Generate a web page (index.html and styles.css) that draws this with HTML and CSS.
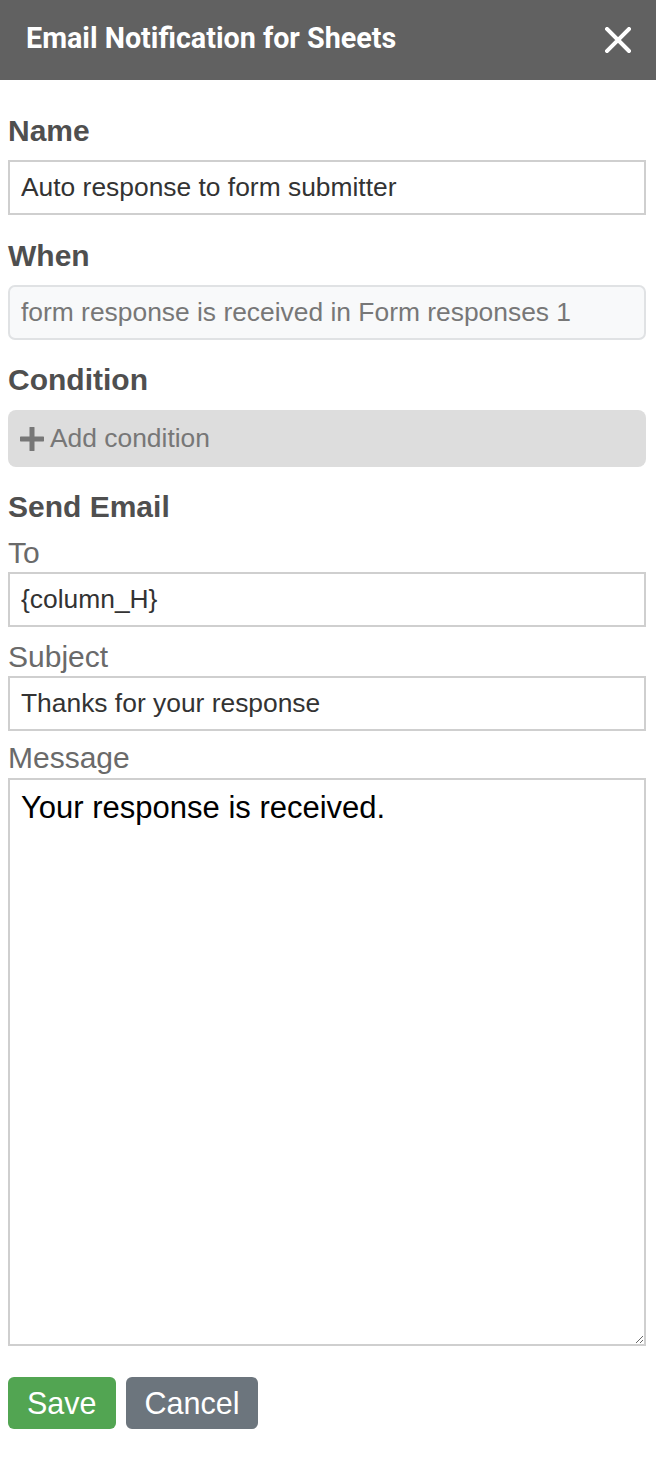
FILE: index.html
```html
<!DOCTYPE html>
<html>
<head>
<meta charset="utf-8">
<link rel="stylesheet" href="styles.css">
</head>
<body>
<header class="topbar">
  <h1 class="title">Email Notification for Sheets</h1>
  <button class="close" aria-label="Close">
    <svg width="26" height="26" viewBox="0 0 26 26"><path d="M2 2 L24 24 M24 2 L2 24" stroke="#fff" stroke-width="4" stroke-linecap="square"/></svg>
  </button>
</header>
<form class="form">
  <div class="group">
    <label class="heading">Name</label>
    <input class="field" type="text" value="Auto response to form submitter">
  </div>
  <div class="group">
    <label class="heading">When</label>
    <div class="field readonly">form response is received in Form responses 1</div>
  </div>
  <div class="group">
    <label class="heading">Condition</label>
    <div class="add-cond">
      <svg class="plus" width="24" height="24" viewBox="0 0 24 24"><path d="M12 1 V23 M1 12 H23" stroke="#777" stroke-width="5" stroke-linecap="round"/></svg>
      <span>Add condition</span>
    </div>
  </div>
  <div class="group send">
    <label class="heading">Send Email</label>
    <label class="sub">To</label>
    <input class="field" type="text" value="{column_H}">
    <label class="sub">Subject</label>
    <input class="field subject" type="text" value="Thanks for your response">
    <label class="sub msg-label">Message</label>
    <textarea class="message">Your response is received.</textarea>
  </div>
  <div class="actions">
    <button type="button" class="btn save">Save</button>
    <button type="button" class="btn cancel">Cancel</button>
  </div>
</form>
</body>
</html>
```
FILE: styles.css
```css
* { box-sizing: border-box; }
html, body { margin: 0; padding: 0; background: #fff; }
body { font-family: "Liberation Sans", Arial, sans-serif; width: 656px; }

.topbar {
  height: 80px;
  background: #616161;
  display: flex;
  align-items: center;
  justify-content: space-between;
  padding: 0 25px 0 26px;
}
.title {
  margin: 0;
  font-family: Roboto, "Liberation Sans", sans-serif;
  font-weight: 700;
  font-size: 28.7px;
  color: #fff;
  line-height: 1;
  margin-top: -4px;
}
.close {
  border: 0;
  background: none;
  padding: 0;
  width: 26px;
  height: 26px;
  display: block;
}
.close svg { display: block; }

.form { padding: 33px 10px 0 8px; }
.group { display: flex; flex-direction: column; }

.heading {
  font-weight: 700;
  font-size: 30px;
  line-height: 36px;
  color: #4f4f4f;
  margin: 0 0 11px;
}
.field {
  height: 55px;
  border: 2px solid #cfcfcf;
  border-radius: 0;
  padding: 0 11px;
  font-family: "Liberation Sans", Arial, sans-serif;
  font-size: 26.4px;
  color: #333;
  background: #fff;
  outline: none;
  margin: 0 0 23px;
  width: 100%;
}
.readonly {
  display: flex;
  align-items: center;
  background: #f8f9fa;
  border: 2px solid #e0e2e4;
  border-radius: 7px;
  color: #777;
  margin-bottom: 22px;
}
.add-cond {
  height: 57px;
  margin-top: 1px;
  background: #dddddd;
  border-radius: 8px;
  display: flex;
  align-items: center;
  gap: 6px;
  padding: 0 12px;
  font-size: 26.4px;
  color: #777;
  margin-bottom: 22px;
}
.plus { display: block; }

.send .heading { margin-bottom: 10px; }
.sub {
  font-size: 30px;
  line-height: 36px;
  color: #6a6a6a;
  margin: 0 0 1px;
}
.send .field { margin-bottom: 12px; height: 55px; }
.send .field.subject { margin-bottom: 9px; }
.sub.msg-label { margin-bottom: 2px; }
.message {
  height: 568px;
  width: 100%;
  border: 2px solid #cfcfcf;
  padding: 10px 11px;
  font-family: "Liberation Sans", Arial, sans-serif;
  font-size: 31px;
  color: #000;
  resize: vertical;
  outline: none;
  display: block;
  margin: 0;
}

.actions {
  display: flex;
  gap: 10px;
  margin-top: 31px;
}
.btn {
  height: 52px;
  border: 0;
  border-radius: 6px;
  color: #fff;
  font-family: "Liberation Sans", Arial, sans-serif;
  font-size: 30.5px;
  padding: 0 19px;
  line-height: 52px;
}
.save { background: #52a552; }
.cancel { background: #6c757d; }
```
